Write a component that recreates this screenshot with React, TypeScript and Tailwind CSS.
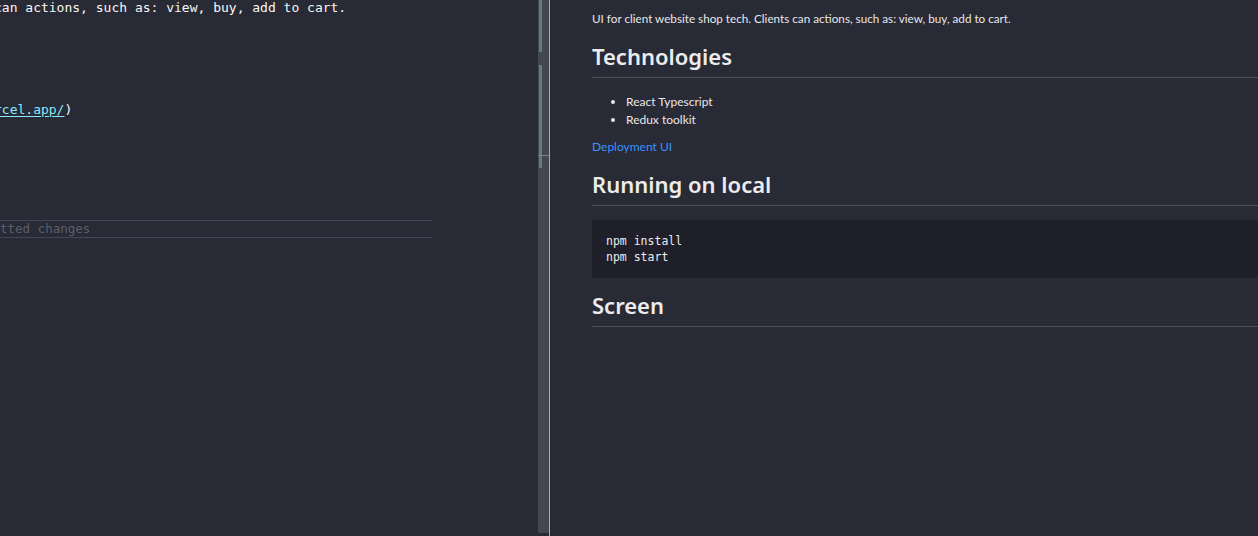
import React from "react";

const mono = "font-['DejaVu_Sans_Mono','Liberation_Mono',monospace]";
const sans = "font-['Lato','Noto_Sans',sans-serif]";
const headingFont = "font-['Noto_Sans','Open_Sans',sans-serif]";

function Heading({ children }: { children: React.ReactNode }) {
    return (
        <h2 className={`border-b border-[#4d4f5a] pb-[5px] ${headingFont} text-[22px] font-semibold leading-[32px] text-[#ececec]`}>
            {children}
        </h2>
    );
}

function Editor() {
    return (
        <div className={`relative w-[538px] shrink-0 overflow-hidden ${mono} text-[13px] leading-[17px] text-[#f8f8f2]`}>
            <div className="mt-[-1px] ml-[-6px] flex flex-col whitespace-pre">
                <div>can actions, such as: view, buy, add to cart.</div>
                <div> </div>
                <div> </div>
                <div> </div>
                <div> </div>
                <div> </div>
                <div>
                    <span className="text-[#8be9fd] underline underline-offset-2">rcel.app/</span>
                    <span>)</span>
                </div>
            </div>
            <div className="mt-[102px] w-[432px] border-y border-[#44475a] leading-[16px] whitespace-pre text-[12.5px] text-[#5c5e6b]">
                tted changes
            </div>
        </div>
    );
}

function Scrollbar() {
    return (
        <div className="flex shrink-0">
            <div className="relative h-[533px] w-[11px] bg-[#45474f]">
                <div className="absolute left-[1px] top-0 h-[52px] w-[3px] bg-[#5d7c86]" />
                <div className="absolute left-[1px] top-[65px] h-[103px] w-[3px] bg-[#5d7c86]" />
                <div className="absolute left-0 top-[155px] h-[1px] w-[11px] bg-[#7b7d86]" />
            </div>
            <div className="w-[1px] bg-[#bd93f9]" />
        </div>
    );
}

function Preview() {
    return (
        <div className={`min-w-0 flex-1 overflow-hidden pl-[42px] ${sans} text-[12px] text-[#e8e8e8]`}>
            <p className="mt-[10px] text-[11.7px] leading-[17px] whitespace-nowrap">
                UI for client website shop tech. Clients can actions, such as: view, buy, add to cart.
            </p>
            <div className="mt-[13px]">
                <Heading>Technologies</Heading>
            </div>
            <ul className="mt-[15px] list-disc pl-[34px] leading-[18px]">
                <li>React Typescript</li>
                <li>Redux toolkit</li>
            </ul>
            <a className="mt-[9px] block leading-[18px] text-[#3794ff]">Deployment UI</a>
            <div className="mt-[12px]">
                <Heading>Running on local</Heading>
            </div>
            <pre className={`mt-[14px] rounded-[3px] bg-[#1e1f29] px-[14px] py-[13px] ${mono} text-[11.5px] leading-[16px] text-[#ececec]`}>
                {"npm install\nnpm start"}
            </pre>
            <div className="mt-[11px]">
                <Heading>Screen</Heading>
            </div>
        </div>
    );
}

export default function App() {
    return (
        <div className="flex h-[536px] w-[1258px] overflow-hidden bg-[#282a36]">
            <Editor />
            <Scrollbar />
            <Preview />
        </div>
    );
}
